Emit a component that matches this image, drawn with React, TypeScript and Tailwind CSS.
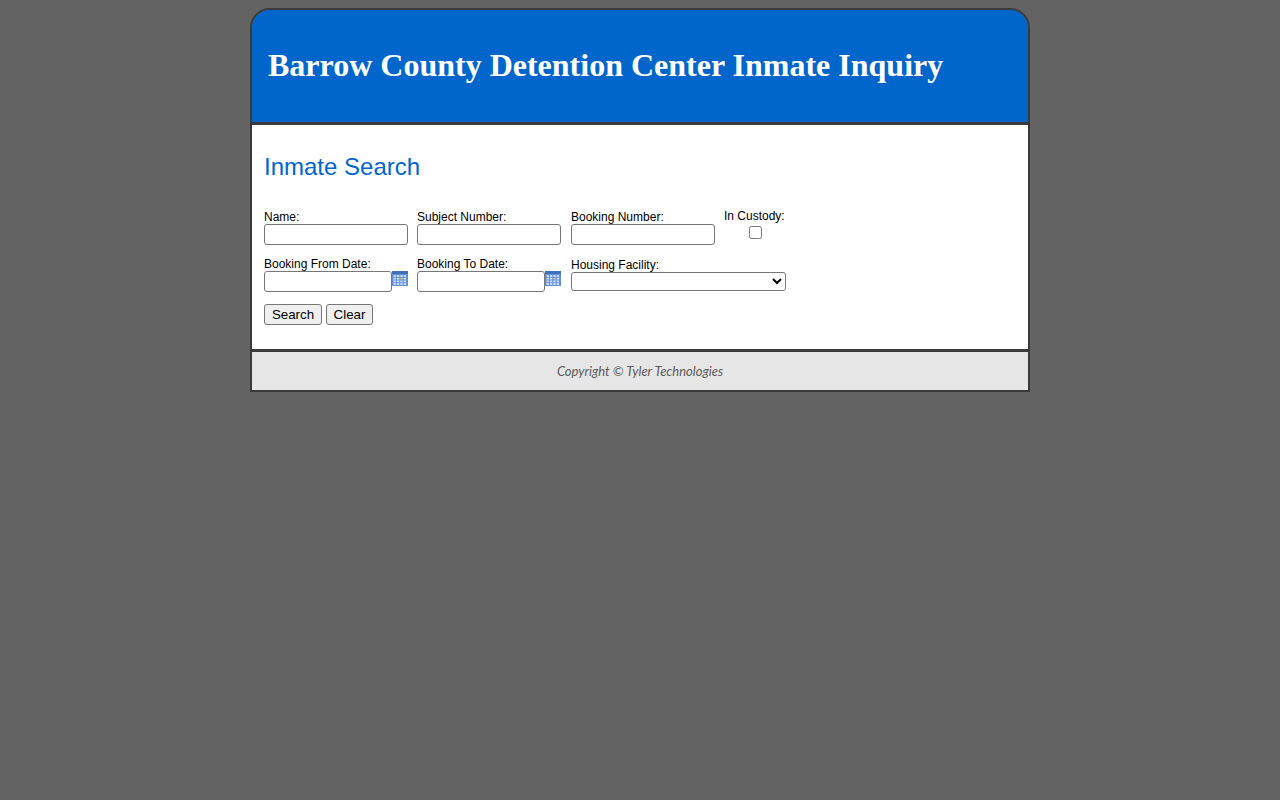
export default function App() {
  const sans = { fontFamily: '"Liberation Sans", Arial, sans-serif' };
  const Cal = () => (
    <svg width="16" height="15" viewBox="0 0 16 15" className="block shrink-0 self-start">
      <rect x="0" y="1" width="16" height="14" fill="#5f8fd6" />
      <rect x="0" y="0" width="16" height="3" fill="#3f6fb8" />
      {[0, 1, 2, 3].flatMap((r) =>
        [0, 1, 2, 3].map((c) => (
          <rect key={`${r}-${c}`} x={1.5 + c * 3.4} y={4 + r * 2.7} width="2.4" height="1.9" fill={r === 1 && c === 2 ? "#e8b48a" : "#c9dcf5"} />
        ))
      )}
    </svg>
  );
  const lbl = "text-[12px] leading-[14px] pt-[2px] text-black";
  const Field = ({ label, cls = "" }: { label: string; cls?: string }) => (
    <div className={`flex flex-col w-[144px] ${cls}`}>
      <label className={lbl}>{label}</label>
      <input className="w-[144px] h-[21px] bg-white border border-[#767676] rounded-[3px]" />
    </div>
  );
  const btn = "h-[21px] bg-[#efefef] border border-[#767676] rounded-[3px] text-[13.33px] leading-none text-black";
  return (
    <div className="min-h-[800px] bg-[#636363] pt-2 pb-2" style={sans}>
      <div className="w-[780px] mx-auto border-2 border-[#3b3b3b] rounded-t-[20px] overflow-hidden">
        <div className="h-[115px] bg-[#0066cc] border-b-[3px] border-[#3b3b3b] flex items-center pl-4 pb-[2px]">
          <h1 className="text-[32px] font-bold text-white" style={{ fontFamily: '"Liberation Serif", "Times New Roman", serif' }}>
            Barrow County Detention Center Inmate Inquiry
          </h1>
        </div>
        <div className="h-[224px] bg-white pl-3 pt-[28px]">
          <h2 className="text-[24px] leading-[28px] text-[#0066cc]">Inmate Search</h2>
          <div className="flex mt-[27px]">
            <Field label="Name:" />
            <Field label="Subject Number:" cls="ml-[9px]" />
            <Field label="Booking Number:" cls="ml-[10px]" />
            <div className="flex flex-col w-[62px] ml-[9px] pt-[1px]">
              <label className="text-[12px] leading-[14px] text-black">In Custody:</label>
              <input type="checkbox" className="w-[13px] h-[13px] mt-[3px] ml-[25px]" />
            </div>
          </div>
          <div className="flex mt-[10px]">
            <div className="flex flex-col w-[144px]">
              <label className={lbl}>Booking From Date:</label>
              <div className="flex"><input className="w-[128px] h-[21px] bg-white border border-[#767676] rounded-[3px]" /><Cal /></div>
            </div>
            <div className="flex flex-col w-[144px] ml-[9px]">
              <label className={lbl}>Booking To Date:</label>
              <div className="flex"><input className="w-[128px] h-[21px] bg-white border border-[#767676] rounded-[3px]" /><Cal /></div>
            </div>
            <div className="flex flex-col mt-[3px] ml-[10px]">
              <label className="text-[12px] leading-[14px] text-black">Housing Facility:</label>
              <select className="w-[215px] h-[19px] bg-white border border-[#767676] rounded-[3px] text-[13.33px]"><option></option></select>
            </div>
          </div>
          <div className="flex gap-1 mt-[12px]">
            <button className={`${btn} w-[58px]`}>Search</button>
            <button className={`${btn} w-[47px]`}>Clear</button>
          </div>
        </div>
        <div className="h-[41px] bg-[#e6e6e6] border-t-[3px] border-[#3b3b3b] flex items-center justify-center pt-[1px]">
          <span className="text-[13px] italic text-[#5a5a5a]" style={{ fontFamily: 'Lato, "Open Sans", sans-serif' }}>Copyright © Tyler Technologies</span>
        </div>
      </div>
    </div>
  );
}
